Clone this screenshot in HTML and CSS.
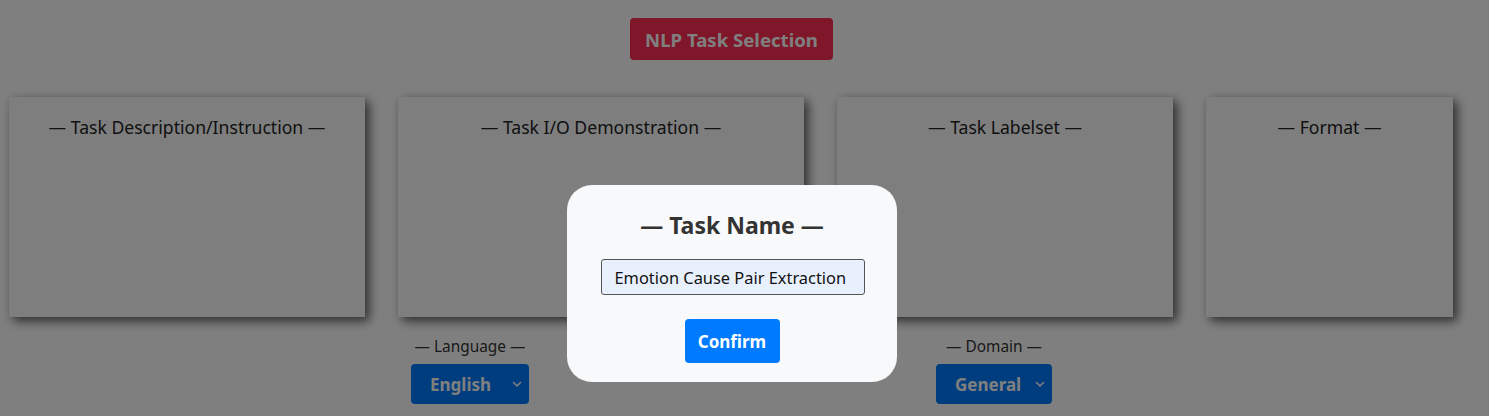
FILE: index.html
```html
<!DOCTYPE html>
<html>
<head>
<meta charset="utf-8">
<link rel="stylesheet" href="styles.css">
</head>
<body>
<div class="page">
  <div class="header">
    <button class="title-btn">NLP Task Selection</button>
  </div>
  <div class="cards">
    <div class="card card-desc"><div class="card-title">— Task Description/Instruction —</div></div>
    <div class="card card-io"><div class="card-title">— Task I/O Demonstration —</div></div>
    <div class="card card-label"><div class="card-title">— Task Labelset —</div></div>
    <div class="card card-format"><div class="card-title">— Format —</div></div>
  </div>
  <div class="selectors">
    <div class="sel-group">
      <div class="sel-label">— Language —</div>
      <div class="select sel-lang"><span>English</span>
        <svg class="chev" width="10" height="8" viewBox="0 0 10 8"><path d="M1.5 2.5 L5 6 L8.5 2.5" fill="none" stroke="#fff" stroke-width="1.6" stroke-linecap="round" stroke-linejoin="round"/></svg>
      </div>
    </div>
    <div class="sel-group sel-mid">
      <div class="sel-label">— Task —</div>
      <div class="select sel-task"><span>Task</span></div>
    </div>
    <div class="sel-group">
      <div class="sel-label">— Domain —</div>
      <div class="select sel-domain"><span>General</span>
        <svg class="chev" width="10" height="8" viewBox="0 0 10 8"><path d="M1.5 2.5 L5 6 L8.5 2.5" fill="none" stroke="#fff" stroke-width="1.6" stroke-linecap="round" stroke-linejoin="round"/></svg>
      </div>
    </div>
  </div>
</div>
<div class="overlay"></div>
<div class="modal">
  <div class="modal-title">— Task Name —</div>
  <input class="modal-input" type="text" value="Emotion Cause Pair Extraction">
  <button class="confirm">Confirm</button>
</div>
</body>
</html>
```
FILE: styles.css
```css
html, body {
  margin: 0;
  padding: 0;
  background: #ffffff;
  font-family: "Noto Sans", "Open Sans", sans-serif;
  overflow: hidden;
}
.page {
  width: 1447px;
  margin-left: 8px;
  padding-top: 18px;
}
.header {
  display: flex;
  justify-content: center;
}
.title-btn {
  width: 203px;
  height: 42px;
  border: none;
  border-radius: 4px;
  background: #ff2d52;
  color: #ffffff;
  font-family: "Noto Sans", sans-serif;
  font-weight: 700;
  font-size: 18.6px;
  padding: 0;
}
.cards {
  display: flex;
  gap: 33px;
  margin-top: 37px;
  padding-left: 1px;
}
.card {
  height: 220px;
  background: #fdfdfd;
  box-shadow: 4px 4px 10px rgba(0,0,0,0.65);
  box-sizing: border-box;
  padding-top: 18px;
}
.card-desc { width: 356px; }
.card-io { width: 406px; }
.card-label { width: 336px; }
.card-format { width: 247px; }
.card-title {
  text-align: center;
  font-size: 17.6px;
  color: #222;
  line-height: 24px;
}
.selectors {
  display: flex;
  justify-content: center;
  gap: 144.5px;
  margin-top: 19px;
}
.sel-group {
  display: flex;
  flex-direction: column;
  align-items: center;
}
.sel-mid { width: 118px; visibility: hidden; }
.sel-label {
  font-size: 15.4px;
  color: #333;
  line-height: 22px;
}
.select {
  margin-top: 6px;
  height: 40px;
  background: #007bff;
  border-radius: 4px;
  color: #fff;
  font-weight: 700;
  font-size: 17px;
  display: flex;
  align-items: center;
  position: relative;
  box-sizing: border-box;
  padding-left: 19px;
}
.sel-lang { width: 118px; }
.sel-task { width: 118px; }
.sel-domain { width: 116px; }
.chev {
  position: absolute;
  right: 7px;
  top: 16px;
}
.overlay {
  position: fixed;
  inset: 0;
  background: rgba(0,0,0,0.5);
}
.modal {
  position: fixed;
  left: 567px;
  top: 185px;
  width: 330px;
  height: 197px;
  box-sizing: border-box;
  background: #f8f9fa;
  border-radius: 25px;
  display: flex;
  flex-direction: column;
  align-items: center;
  padding-top: 23px;
}
.modal-title {
  font-size: 23px;
  font-weight: 700;
  color: #333;
  line-height: 34px;
}
.modal-input {
  margin-top: 17px;
  width: 264px;
  height: 36px;
  box-sizing: border-box;
  background: #e8f0fe;
  border: 1px solid #555;
  border-radius: 3px;
  padding: 0 0 0 13px;
  font-family: "Noto Sans", sans-serif;
  font-size: 16.4px;
  color: #111;
  margin-left: 1px;
}
.confirm {
  margin-top: 24px;
  width: 95px;
  height: 44px;
  border: none;
  border-radius: 4px;
  background: #007bff;
  color: #fff;
  font-family: "Noto Sans", sans-serif;
  font-weight: 700;
  font-size: 17px;
  padding: 0;
}
```
